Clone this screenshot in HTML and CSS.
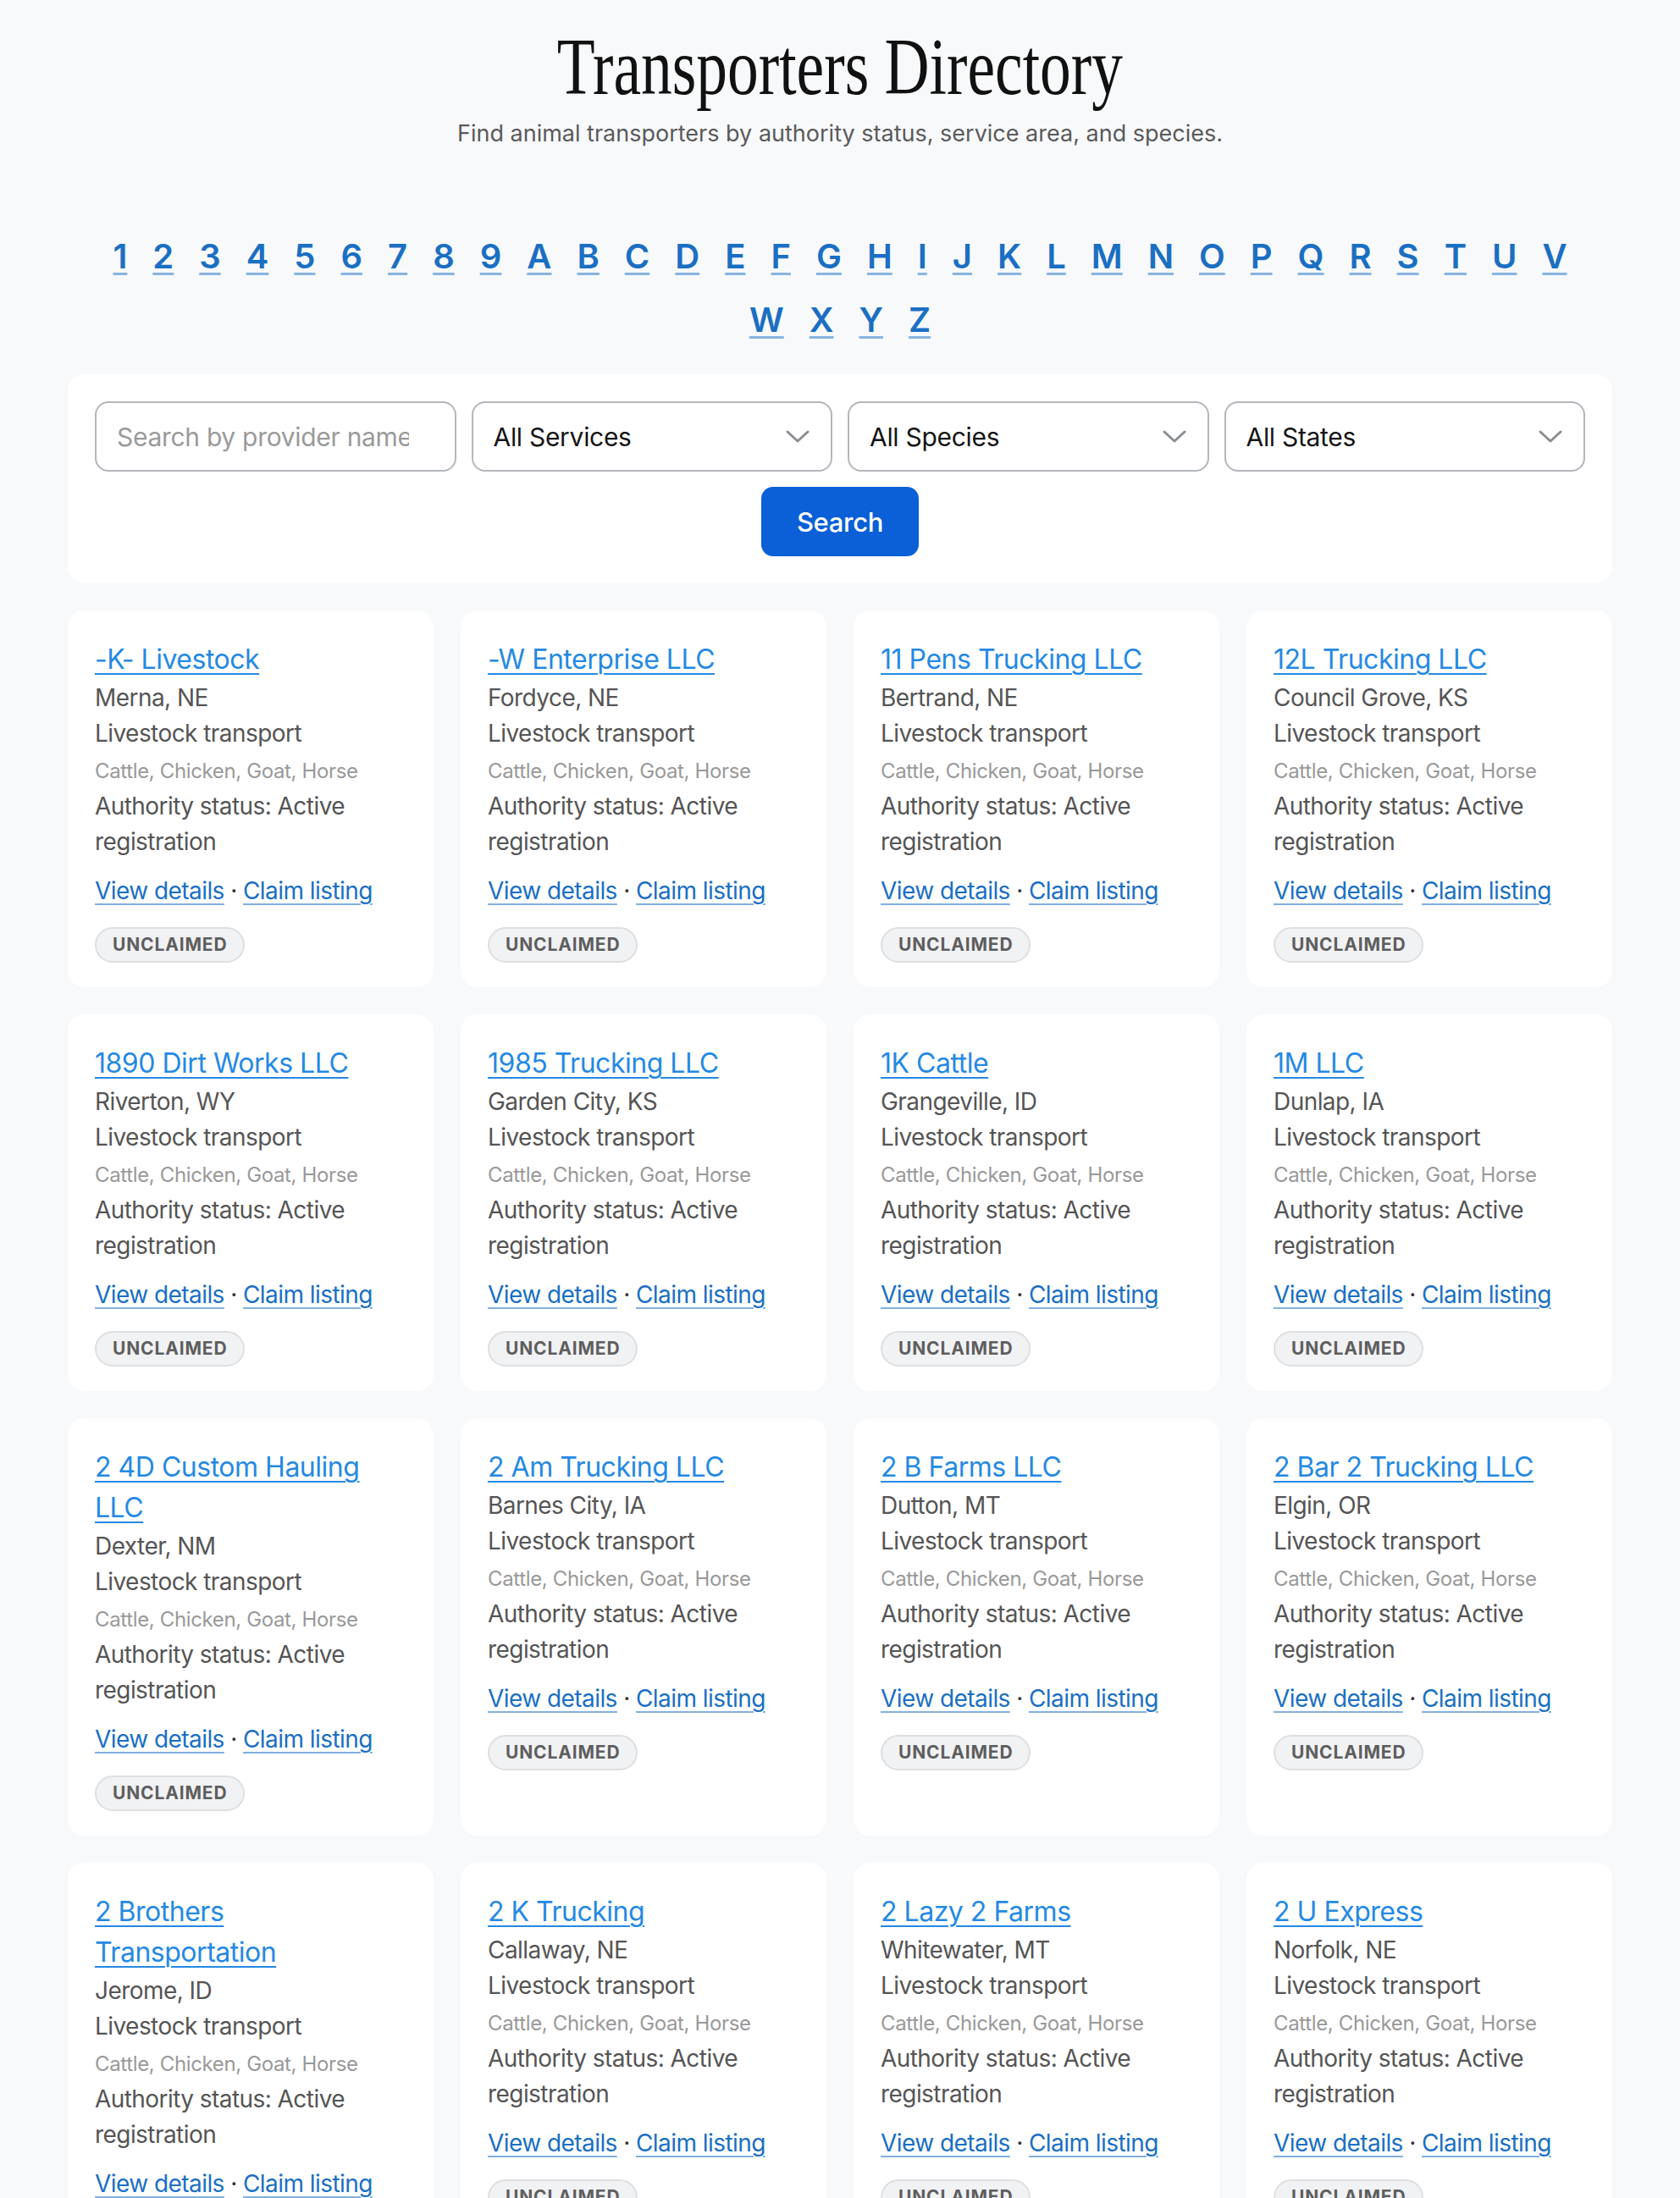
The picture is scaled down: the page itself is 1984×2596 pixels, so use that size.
FILE: index.html
```html
<!DOCTYPE html>
<html lang="en">
<head>
<meta charset="utf-8">
<title>Transporters Directory</title>
<link rel="stylesheet" href="styles.css">
</head>
<body>
<main class="page">
  <header class="hero">
    <h1 class="title"><span class="title-text">Transporters Directory</span></h1>
    <p class="subtitle">Find animal transporters by authority status, service area, and species.</p>
  </header>

  <nav class="alpha">
    <a href="#">1</a><a href="#">2</a><a href="#">3</a><a href="#">4</a><a href="#">5</a><a href="#">6</a><a href="#">7</a><a href="#">8</a><a href="#">9</a>
    <a href="#">A</a><a href="#">B</a><a href="#">C</a><a href="#">D</a><a href="#">E</a><a href="#">F</a><a href="#">G</a><a href="#">H</a><a href="#">I</a><a href="#">J</a><a href="#">K</a><a href="#">L</a><a href="#">M</a><a href="#">N</a><a href="#">O</a><a href="#">P</a><a href="#">Q</a><a href="#">R</a><a href="#">S</a><a href="#">T</a><a href="#">U</a><a href="#">V</a><a href="#">W</a><a href="#">X</a><a href="#">Y</a><a href="#">Z</a>
  </nav>

  <form class="filters">
    <div class="fields">
      <input class="field" type="text" placeholder="Search by provider name">
      <div class="select-wrap">
        <select class="field select"><option>All Services</option></select>
        <svg class="chev" viewBox="0 0 28 16" width="28" height="16"><path d="M2 2 L14 13 L26 2" fill="none" stroke="#8a8d91" stroke-width="3" stroke-linecap="round" stroke-linejoin="round"/></svg>
      </div>
      <div class="select-wrap">
        <select class="field select"><option>All Species</option></select>
        <svg class="chev" viewBox="0 0 28 16" width="28" height="16"><path d="M2 2 L14 13 L26 2" fill="none" stroke="#8a8d91" stroke-width="3" stroke-linecap="round" stroke-linejoin="round"/></svg>
      </div>
      <div class="select-wrap">
        <select class="field select"><option>All States</option></select>
        <svg class="chev" viewBox="0 0 28 16" width="28" height="16"><path d="M2 2 L14 13 L26 2" fill="none" stroke="#8a8d91" stroke-width="3" stroke-linecap="round" stroke-linejoin="round"/></svg>
      </div>
    </div>
    <button class="search-btn" type="button">Search</button>
  </form>

  <section class="grid">
    <article class="card">
      <a class="card-title" href="#">-K- Livestock</a>
      <div class="line">Merna, NE</div>
      <div class="line">Livestock transport</div>
      <div class="species">Cattle, Chicken, Goat, Horse</div>
      <div class="line">Authority status: Active registration</div>
      <div class="links"><a href="#">View details</a> · <a href="#">Claim listing</a></div>
      <div><span class="badge">UNCLAIMED</span></div>
    </article>
    <article class="card">
      <a class="card-title" href="#">-W Enterprise LLC</a>
      <div class="line">Fordyce, NE</div>
      <div class="line">Livestock transport</div>
      <div class="species">Cattle, Chicken, Goat, Horse</div>
      <div class="line">Authority status: Active registration</div>
      <div class="links"><a href="#">View details</a> · <a href="#">Claim listing</a></div>
      <div><span class="badge">UNCLAIMED</span></div>
    </article>
    <article class="card">
      <a class="card-title" href="#">11 Pens Trucking LLC</a>
      <div class="line">Bertrand, NE</div>
      <div class="line">Livestock transport</div>
      <div class="species">Cattle, Chicken, Goat, Horse</div>
      <div class="line">Authority status: Active registration</div>
      <div class="links"><a href="#">View details</a> · <a href="#">Claim listing</a></div>
      <div><span class="badge">UNCLAIMED</span></div>
    </article>
    <article class="card">
      <a class="card-title" href="#">12L Trucking LLC</a>
      <div class="line">Council Grove, KS</div>
      <div class="line">Livestock transport</div>
      <div class="species">Cattle, Chicken, Goat, Horse</div>
      <div class="line">Authority status: Active registration</div>
      <div class="links"><a href="#">View details</a> · <a href="#">Claim listing</a></div>
      <div><span class="badge">UNCLAIMED</span></div>
    </article>

    <article class="card">
      <a class="card-title" href="#">1890 Dirt Works LLC</a>
      <div class="line">Riverton, WY</div>
      <div class="line">Livestock transport</div>
      <div class="species">Cattle, Chicken, Goat, Horse</div>
      <div class="line">Authority status: Active registration</div>
      <div class="links"><a href="#">View details</a> · <a href="#">Claim listing</a></div>
      <div><span class="badge">UNCLAIMED</span></div>
    </article>
    <article class="card">
      <a class="card-title" href="#">1985 Trucking LLC</a>
      <div class="line">Garden City, KS</div>
      <div class="line">Livestock transport</div>
      <div class="species">Cattle, Chicken, Goat, Horse</div>
      <div class="line">Authority status: Active registration</div>
      <div class="links"><a href="#">View details</a> · <a href="#">Claim listing</a></div>
      <div><span class="badge">UNCLAIMED</span></div>
    </article>
    <article class="card">
      <a class="card-title" href="#">1K Cattle</a>
      <div class="line">Grangeville, ID</div>
      <div class="line">Livestock transport</div>
      <div class="species">Cattle, Chicken, Goat, Horse</div>
      <div class="line">Authority status: Active registration</div>
      <div class="links"><a href="#">View details</a> · <a href="#">Claim listing</a></div>
      <div><span class="badge">UNCLAIMED</span></div>
    </article>
    <article class="card">
      <a class="card-title" href="#">1M LLC</a>
      <div class="line">Dunlap, IA</div>
      <div class="line">Livestock transport</div>
      <div class="species">Cattle, Chicken, Goat, Horse</div>
      <div class="line">Authority status: Active registration</div>
      <div class="links"><a href="#">View details</a> · <a href="#">Claim listing</a></div>
      <div><span class="badge">UNCLAIMED</span></div>
    </article>

    <article class="card">
      <a class="card-title" href="#">2 4D Custom Hauling LLC</a>
      <div class="line">Dexter, NM</div>
      <div class="line">Livestock transport</div>
      <div class="species">Cattle, Chicken, Goat, Horse</div>
      <div class="line">Authority status: Active registration</div>
      <div class="links"><a href="#">View details</a> · <a href="#">Claim listing</a></div>
      <div><span class="badge">UNCLAIMED</span></div>
    </article>
    <article class="card">
      <a class="card-title" href="#">2 Am Trucking LLC</a>
      <div class="line">Barnes City, IA</div>
      <div class="line">Livestock transport</div>
      <div class="species">Cattle, Chicken, Goat, Horse</div>
      <div class="line">Authority status: Active registration</div>
      <div class="links"><a href="#">View details</a> · <a href="#">Claim listing</a></div>
      <div><span class="badge">UNCLAIMED</span></div>
    </article>
    <article class="card">
      <a class="card-title" href="#">2 B Farms LLC</a>
      <div class="line">Dutton, MT</div>
      <div class="line">Livestock transport</div>
      <div class="species">Cattle, Chicken, Goat, Horse</div>
      <div class="line">Authority status: Active registration</div>
      <div class="links"><a href="#">View details</a> · <a href="#">Claim listing</a></div>
      <div><span class="badge">UNCLAIMED</span></div>
    </article>
    <article class="card">
      <a class="card-title" href="#">2 Bar 2 Trucking LLC</a>
      <div class="line">Elgin, OR</div>
      <div class="line">Livestock transport</div>
      <div class="species">Cattle, Chicken, Goat, Horse</div>
      <div class="line">Authority status: Active registration</div>
      <div class="links"><a href="#">View details</a> · <a href="#">Claim listing</a></div>
      <div><span class="badge">UNCLAIMED</span></div>
    </article>

    <article class="card">
      <a class="card-title" href="#">2 Brothers Transportation</a>
      <div class="line">Jerome, ID</div>
      <div class="line">Livestock transport</div>
      <div class="species">Cattle, Chicken, Goat, Horse</div>
      <div class="line">Authority status: Active registration</div>
      <div class="links"><a href="#">View details</a> · <a href="#">Claim listing</a></div>
      <div><span class="badge">UNCLAIMED</span></div>
    </article>
    <article class="card">
      <a class="card-title" href="#">2 K Trucking</a>
      <div class="line">Callaway, NE</div>
      <div class="line">Livestock transport</div>
      <div class="species">Cattle, Chicken, Goat, Horse</div>
      <div class="line">Authority status: Active registration</div>
      <div class="links"><a href="#">View details</a> · <a href="#">Claim listing</a></div>
      <div><span class="badge">UNCLAIMED</span></div>
    </article>
    <article class="card">
      <a class="card-title" href="#">2 Lazy 2 Farms</a>
      <div class="line">Whitewater, MT</div>
      <div class="line">Livestock transport</div>
      <div class="species">Cattle, Chicken, Goat, Horse</div>
      <div class="line">Authority status: Active registration</div>
      <div class="links"><a href="#">View details</a> · <a href="#">Claim listing</a></div>
      <div><span class="badge">UNCLAIMED</span></div>
    </article>
    <article class="card">
      <a class="card-title" href="#">2 U Express</a>
      <div class="line">Norfolk, NE</div>
      <div class="line">Livestock transport</div>
      <div class="species">Cattle, Chicken, Goat, Horse</div>
      <div class="line">Authority status: Active registration</div>
      <div class="links"><a href="#">View details</a> · <a href="#">Claim listing</a></div>
      <div><span class="badge">UNCLAIMED</span></div>
    </article>
  </section>
</main>
</body>
</html>
```

FILE: styles.css
```css
* { box-sizing: border-box; }

html, body {
  margin: 0;
  padding: 0;
  background: #f7f9fb;
}

body {
  font-family: Inter, "Noto Sans", "Liberation Sans", sans-serif;
  color: #555;
}

.page {
  max-width: 1984px;
  padding: 31px 80px 80px;
}

.hero {
  text-align: center;
}

.title {
  margin: 0;
  font-family: "Liberation Serif", "Times New Roman", serif;
  font-weight: 400;
  font-size: 96px;
  line-height: 96px;
  color: #111;
}

.title-text {
  display: inline-block;
  transform: scaleX(0.765);
  transform-origin: center;
  white-space: nowrap;
}

.subtitle {
  margin: 11px 0 0;
  font-size: 27px;
  line-height: 39px;
  color: #5a5a5a;
}

.alpha {
  margin-top: 96px;
  padding: 0 32px;
  display: flex;
  flex-wrap: wrap;
  justify-content: center;
  column-gap: 30px;
  row-gap: 15px;
}

.alpha a {
  font-size: 40px;
  line-height: 60px;
  font-weight: 600;
  color: #1b6fc2;
  text-decoration: underline;
  text-decoration-color: rgba(27, 111, 194, 0.5);
  text-decoration-thickness: 3px;
  text-underline-offset: 5px;
}

.filters {
  margin-top: 34px;
  background: #fff;
  border-radius: 20px;
  padding: 32px;
  display: flex;
  flex-direction: column;
  align-items: center;
  gap: 18px;
}

.fields {
  width: 100%;
  display: grid;
  grid-template-columns: repeat(4, 1fr);
  gap: 18px;
}

.field {
  width: 100%;
  height: 83px;
  border: 2px solid #b3b7bb;
  border-radius: 16px;
  background: #fff;
  padding: 0 54px 0 24px;
  font-family: Inter, "Noto Sans", sans-serif;
  font-size: 30px;
  color: #151515;
  letter-spacing: -0.01em;
  outline: none;
}

.field::placeholder {
  color: #9a9a9a;
}

.select-wrap {
  position: relative;
}

.select {
  appearance: none;
  -webkit-appearance: none;
}

.chev {
  position: absolute;
  right: 27px;
  top: 34px;
  pointer-events: none;
}

.search-btn {
  height: 82px;
  padding: 0 42px;
  border: none;
  border-radius: 14px;
  background: #0b5fd7;
  color: #fff;
  font-family: Inter, "Noto Sans", sans-serif;
  font-size: 31px;
  font-weight: 500;
  letter-spacing: -0.01em;
}

.grid {
  margin-top: 32px;
  display: grid;
  grid-template-columns: repeat(4, 1fr);
  gap: 32px;
}

.card {
  background: #fff;
  border-radius: 20px;
  padding: 34px 32px 29px;
}

.card-title {
  display: block;
  font-size: 32px;
  line-height: 48px;
  color: #2589e3;
  text-decoration: underline;
  text-decoration-thickness: 2px;
  text-underline-offset: 5px;
  letter-spacing: -0.015em;
}

.line {
  font-size: 28px;
  line-height: 42px;
  color: #555;
  letter-spacing: -0.02em;
}

.species {
  margin: 6px 0 2px;
  font-size: 24px;
  line-height: 36px;
  color: #999;
  letter-spacing: -0.015em;
}

.links {
  margin-top: 16px;
  font-size: 28px;
  line-height: 42px;
  color: #333;
  letter-spacing: -0.02em;
}

.links a {
  color: #1a6fc4;
  text-decoration: underline;
  text-decoration-color: rgba(26, 111, 196, 0.55);
  text-decoration-thickness: 2px;
  text-underline-offset: 5px;
}

.badge {
  display: inline-block;
  margin-top: 22px;
  height: 42px;
  line-height: 38px;
  padding: 0 19px;
  border: 2px solid #dedfe1;
  border-radius: 21px;
  background: #f1f2f4;
  color: #5e5e5e;
  font-size: 21px;
  font-weight: 700;
  letter-spacing: 0.04em;
}
```
